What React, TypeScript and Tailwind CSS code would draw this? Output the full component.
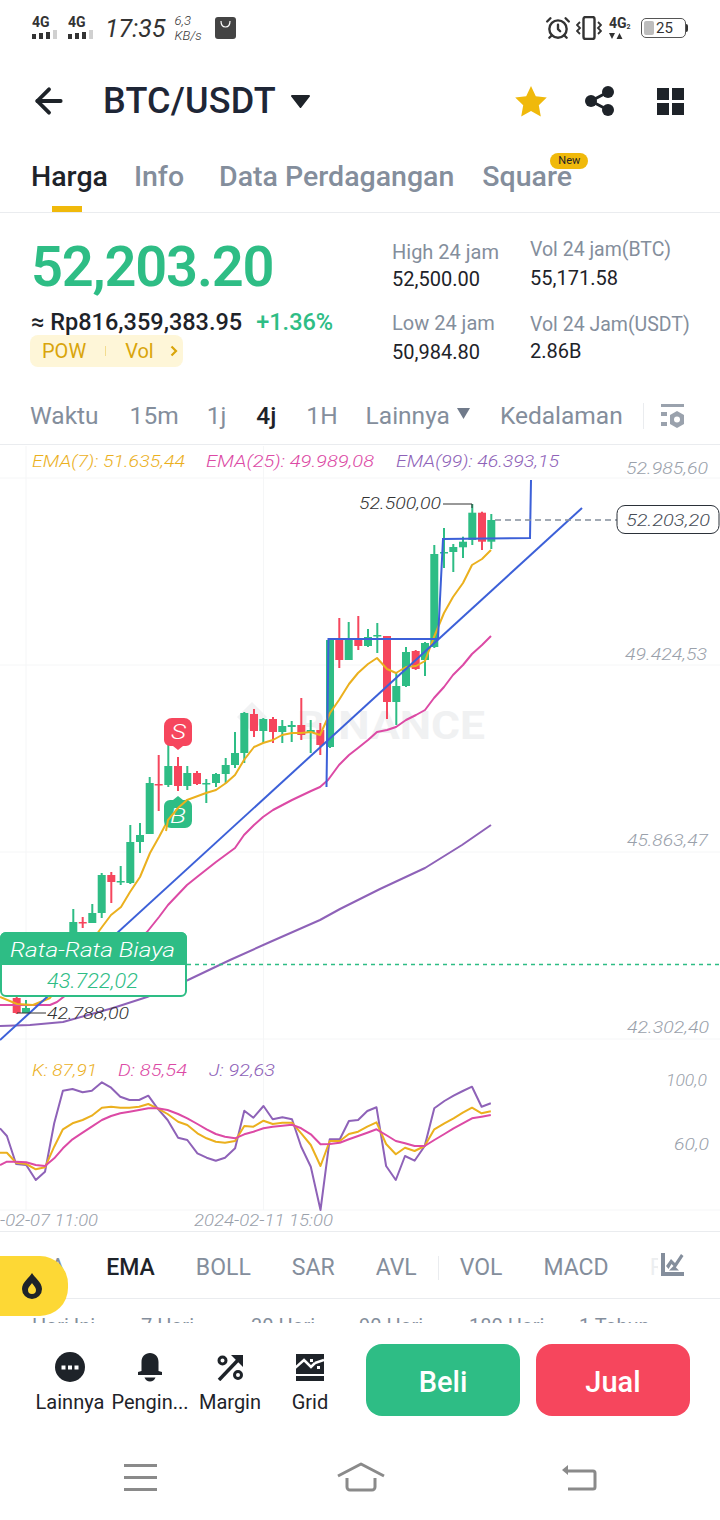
import { AlarmClock, ArrowLeft } from "lucide-react";

type Candle = [number, number, number, number, number, "g" | "r"];

// x, wick top, body top, body bottom, wick bottom
const candles: Candle[] = [
  [491.3, 514, 520, 541.7, 549, "g"], [482, 511.7, 512.7, 541.7, 550, "r"], [472.3, 504, 512.7, 540, 545, "g"],
  [463, 536.7, 541.7, 547.3, 558, "g"], [453.3, 544, 547, 552, 572, "g"], [444, 528, 552, 553.5, 568, "g"],
  [434.3, 545, 554, 647, 648, "g"], [425, 642, 643, 660, 676, "g"], [415.7, 650, 651, 669, 670, "r"],
  [406, 647, 652, 686, 687, "g"], [396.3, 673, 686, 702, 725, "g"], [387, 636, 636, 702, 719, "r"],
  [377.3, 623, 635, 636.5, 653, "g"], [368, 629, 637, 646, 647, "g"], [358.3, 616, 640, 646, 650, "r"],
  [348.7, 622, 640, 660, 660, "g"], [339.3, 618, 640, 660, 668, "r"], [330, 638, 640, 747, 748, "g"],
  [320.3, 723, 730, 745, 755, "r"], [310.7, 720, 730, 733, 753, "g"], [301.3, 698, 725, 735, 740, "r"],
  [291.7, 721, 725, 727, 742, "g"], [282.3, 720, 726, 732, 743, "g"], [273, 717, 719, 732, 743, "r"],
  [263.3, 718, 719, 731, 743, "g"], [254, 709, 714, 731, 737, "r"], [244.3, 712, 713, 753, 763, "g"],
  [235, 732, 753, 765, 768, "g"], [225.7, 758, 765, 774, 783, "g"], [216, 773, 774, 783, 787, "g"],
  [206.3, 779, 783, 784.5, 803, "g"], [197, 771, 773, 784, 785, "r"], [187.3, 766, 773, 786, 790, "g"],
  [178, 757, 766, 786, 791, "r"], [168.3, 743, 766, 785, 787, "g"], [158.7, 755, 784, 785.5, 811, "r"],
  [149.7, 777, 783, 834, 834, "g"], [140, 823, 835, 842, 853, "g"], [130.3, 825, 842, 883, 884, "g"],
  [120.7, 866, 881, 882.5, 885, "g"], [111.3, 872, 875, 882, 903, "r"], [101.7, 873, 875, 913, 918, "g"],
  [92.3, 904, 913, 923, 923, "g"], [82.7, 917, 922, 923.5, 928, "r"], [73.3, 909, 922, 932, 938, "g"],
  [26, 1000, 1008, 1013, 1013, "g"], [16.7, 995, 998, 1013, 1014, "r"],
];

const ema7 = "0,997 17,1004 33,1005 50,998 102,927 111,915 121,907 130,892 140,877 150,853 159,837 168,820 178,808 187,800 206,793 216,790 226,783 235,775 244,760 254,747 263,743 273,740 282,735 292,733 301,733 311,732 320,735 330,713 339,700 349,684 358,673 368,664 377,658 387,669 396,673 406,667 416,666 425,661 434,637 444,613 453,597 463,583 472,565 482,559 491,550";
const ema25 = "0,1005 33,1005 50,1005 57,1002 147,932 159,917 168,905 187,885 197,877 216,862 235,848 244,835 254,825 263,817 273,810 292,800 311,791 320,787 328,780 339,765 349,755 358,748 368,740 377,732 387,730 396,727 406,720 416,715 425,710 434,698 444,687 453,675 463,665 472,654 482,645 491,636";
const ema99 = "0,1026 30,1025 63,1022 113,1008 147,997 188,980 230,960 270,942 320,920 340,909 380,889 425,868 462,845 491,825";

// KDJ points read off the zoomed crop (x / 2.178, 1040 + y / 3)
const kdjXs = [0,15,35,57,78,98,118,137,158,180,200,222,242,262,282,303,323,343,365,388,408,430,450,470,490,512,532,552,574,594,615,636,656,677,698,718,740,760,780,800,820,841,862,882,903,925,946,968,988,1008,1028,1049,1069];
const kdjJ = [265,288,372,375,420,395,250,152,147,157,152,127,143,170,180,180,167,205,240,293,300,340,353,362,353,325,212,233,198,238,232,238,320,380,510,298,298,243,240,213,202,378,420,348,362,318,205,183,167,153,140,200,190];
const kdjK = [338,338,368,372,388,382,320,268,250,240,227,203,200,203,203,200,192,205,222,245,255,280,295,305,308,303,258,260,242,252,248,248,280,315,378,303,303,282,275,260,247,312,343,323,333,318,268,250,235,218,203,220,214];
const kdjD = [375,365,365,367,375,378,355,325,298,278,260,240,228,220,215,210,205,205,210,222,235,252,268,282,290,295,283,275,265,260,257,254,265,283,313,312,308,298,288,278,268,285,303,310,318,318,300,282,265,250,235,230,225];
const kdjLine = (ys: number[]) => ys.map((y, i) => `${(kdjXs[i] / 2.178).toFixed(1)},${(1040 + y / 3).toFixed(1)}`).join(" ");

const Label = ({ x, y, w, size = 16, fill = "#9aa1ab", children }: { x: number; y: number; w: number; size?: number; fill?: string; children: string }) => (
  <text x={x} y={y} fontSize={size} fill={fill} textLength={w} lengthAdjust="spacingAndGlyphs" dominantBaseline="central" className="italic font-light">
    {children}
  </text>
);

const Chart = () => (
  <svg width="720" height="786" viewBox="0 445 720 786" className="block">
    {/* grid */}
    <g stroke="#f5f6f7" strokeWidth="1">
      {[478, 665, 852, 1039, 1210].map((y) => <line key={y} x1="0" x2="720" y1={y} y2={y} />)}
      {[26, 263.5].map((x) => <line key={x} x1={x} x2={x} y1="446" y2="1210" />)}
    </g>

    {/* watermark */}
    <path d="M252 702l15 15-15 15-15-15z" fill="#f1f2f3" />
    <text x="297" y="726" fontSize="38" fontWeight="700" fill="#f0f1f2" textLength="188" lengthAdjust="spacingAndGlyphs" dominantBaseline="central">BINANCE</text>

    {/* candles */}
    {candles.map(([x, wt, bt, bb, wb, c]) => (
      <g key={x} fill={c === "g" ? "#2ebd85" : "#f6465d"}>
        <rect x={x - 1} y={wt} width="2" height={wb - wt} />
        <rect x={x - 4} y={bt} width="8" height={Math.max(bb - bt, 1.5)} />
      </g>
    ))}

    {/* ema */}
    <g fill="none" strokeWidth="2" strokeLinejoin="round">
      <polyline points={ema99} stroke="#8e62b8" />
      <polyline points={ema25} stroke="#dc4aa5" />
      <polyline points={ema7} stroke="#ebb01e" />
    </g>

    {/* drawn trend lines */}
    <g fill="none" stroke="#3c60d8" strokeWidth="2">
      <line x1="0" y1="1040" x2="582" y2="508" />
      <polyline points="326.5,787 328.5,639 438,639 443,539 530,538 531,480" />
    </g>

    {/* high / low / last */}
    <polyline points="443,504 472,504 472,508" fill="none" stroke="#333" strokeWidth="1" />
    <Label x={359} y={503} w={82} fill="#333">52.500,00</Label>
    <line x1="495" x2="617" y1="520" y2="520" stroke="#848e9c" strokeWidth="1.5" strokeDasharray="6 4" />
    <rect x="617" y="505.5" width="102" height="28" rx="8" fill="#fff" stroke="#2b3139" strokeWidth="1" />
    <Label x={626} y={520} w={84} fill="#474d57">52.203,20</Label>
    <line x1="17" x2="46" y1="1013" y2="1013" stroke="#333" strokeWidth="1" />
    <Label x={47} y={1013} w={82} fill="#333">42.788,00</Label>

    {/* price axis */}
    <Label x={626} y={468} w={82}>52.985,60</Label>
    <Label x={625} y={654} w={82}>49.424,53</Label>
    <Label x={627} y={840} w={81}>45.863,47</Label>
    <Label x={627} y={1027} w={82}>42.302,40</Label>

    {/* legend */}
    <Label x={32} y={461} w={153} fill="#ebb01e">EMA(7): 51.635,44</Label>
    <Label x={206} y={461} w={168} fill="#dc4aa5">EMA(25): 49.989,08</Label>
    <Label x={396} y={461} w={163} fill="#8e62b8">EMA(99): 46.393,15</Label>

    {/* buy / sell markers */}
    <path d="M172 718h12a8 8 0 0 1 8 8v14a6 6 0 0 1-6 6h-3l-5 4-5-4h-3a6 6 0 0 1-6-6v-14a8 8 0 0 1 8-8z" fill="#f6465d" />
    <Label x={171} y={732} w={15} size={20} fill="#fff">S</Label>
    <path d="M178 796l5 4h3a6 6 0 0 1 6 6v15a7 7 0 0 1-7 7h-14a7 7 0 0 1-7-7v-15a6 6 0 0 1 6-6h3z" fill="#2ebd85" />
    <Label x={170} y={816} w={16} size={20} fill="#fff">B</Label>
    <polyline points="166,831 168,820 178,808 187,800" fill="none" stroke="#ebb01e" strokeWidth="2" />

    {/* average cost box */}
    <line x1="187" x2="720" y1="964.5" y2="964.5" stroke="#2ebd85" strokeWidth="1.5" strokeDasharray="4 4" />
    <rect x="1" y="933" width="185" height="63" rx="5" fill="#fff" stroke="#2ebd85" strokeWidth="2" />
    <path d="M0 965v-27a6 6 0 0 1 6-6h175a6 6 0 0 1 6 6v27z" fill="#2ebd85" />
    <Label x={10} y={950} w={165} size={20} fill="#fff">Rata-Rata Biaya</Label>
    <Label x={47} y={981} w={91} size={20} fill="#2ebd85">43.722,02</Label>

    {/* kdj */}
    <Label x={32} y={1070} w={65} fill="#ebb01e">K: 87,91</Label>
    <Label x={118} y={1070} w={69} fill="#dc4aa5">D: 85,54</Label>
    <Label x={209} y={1070} w={66} fill="#8e62b8">J: 92,63</Label>
    <Label x={666} y={1080} w={41}>100,0</Label>
    <Label x={674} y={1144} w={35}>60,0</Label>
    <g fill="none" strokeWidth="2" strokeLinejoin="round">
      <polyline points={kdjLine(kdjJ)} stroke="#8e62b8" />
      <polyline points={kdjLine(kdjK)} stroke="#ebb01e" />
      <polyline points={kdjLine(kdjD)} stroke="#dc4aa5" />
    </g>
    <Label x={0} y={1220} w={98}>-02-07 11:00</Label>
    <Label x={194} y={1220} w={139}>2024-02-11 15:00</Label>
  </svg>
);

const Signal = () => (
  <div className="flex flex-col items-start w-[28px] h-[24px]">
    <span className="text-[14px] leading-[12px] font-bold text-[#333]">4G</span>
    <div className="flex items-end gap-[3px] mt-[2px] h-[9px]">
      <span className="w-[4px] h-[5px] bg-[#333]" />
      <span className="w-[4px] h-[6px] bg-[#333]" />
      <span className="w-[4px] h-[7px] bg-[#333]" />
      <span className="w-[4px] h-[9px] bg-[#d0d0d0]" />
    </div>
  </div>
);

const StatusBar = () => (
  <div className="h-[56px] flex items-center pl-[32px] pr-[34px] text-[#333]">
    <div className="flex gap-2"><Signal /><Signal /></div>
    <span className="ml-[9px] text-[25px] italic leading-none">17:35</span>
    <div className="ml-[9px] flex flex-col w-[32px] text-[13px] leading-[15px] italic font-light">
      <span>6,3</span>
      <span>KB/s</span>
    </div>
    <svg width="21" height="22" viewBox="0 0 21 22" className="ml-[8px]">
      <rect width="21" height="22" rx="3" fill="#444" />
      <path d="M6 4c0 4 2 6 4.500 6S15 8 15 4" fill="none" stroke="#fff" strokeWidth="1.200" />
    </svg>
    <AlarmClock size={26} strokeWidth={2.2} className="ml-auto text-[#333]" />
    <svg width="26" height="24" viewBox="0 0 26 24" className="ml-[5px]" fill="none" stroke="#333">
      <rect x="7.500" y="1" width="11" height="22" rx="2" strokeWidth="2.400" />
      <path d="M4 6L1 9l3 3-3 3 3 3M22 6l3 3-3 3 3 3-3 3" strokeWidth="1.800" />
    </svg>
    <div className="ml-[7px] w-[24px] flex flex-col">
      <span className="text-[14px] leading-[12px] font-bold whitespace-nowrap">4G<sub className="text-[7px]">2</sub></span>
      <svg width="14" height="8" viewBox="0 0 14 8" className="mt-[3px]">
        <path d="M0 1h6L3 7zM7.500 7h6l-3-6z" fill="#333" />
      </svg>
    </div>
    <div className="ml-[8px] w-[45px] h-[20px] border border-[#555] rounded-[5px] flex items-center relative">
      <span className="ml-[2px] w-[10px] h-[14px] rounded-[2px] bg-[#bdbdbd]" />
      <span className="ml-[2px] text-[15px] leading-none">25</span>
      <span className="absolute right-[-3px] w-[2px] h-[8px] bg-[#333] rounded-r" />
    </div>
  </div>
);

const Header = () => (
  <div className="h-[90px] flex items-center pl-[29px] pr-[36px]">
    <ArrowLeft size={40} strokeWidth={2.3} className="text-[#1e2329]" />
    <span className="ml-[34px] text-[36px] font-medium text-[#1e2636] leading-none tracking-[0.2px]">BTC/USDT</span>
    <svg width="19" height="13" viewBox="0 0 19 13" className="ml-[15px]"><path d="M1 0h17a1 1 0 0 1 .8 1.600l-8.500 11a1 1 0 0 1-1.600 0L.2 1.600A1 1 0 0 1 1 0z" fill="#1e2329" /></svg>
    <svg width="32" height="31" viewBox="0 0 32 31" className="ml-auto">
      <path d="M16 0l4.800 10.200 11 1.400-8 7.700 2 11.200L16 25l-9.800 5.500 2-11.200-8-7.700 11-1.400z" fill="#f0b90b" strokeLinejoin="round" />
    </svg>
    <svg width="29" height="30" viewBox="0 0 29 30" className="ml-[38px]">
      <g fill="#1e2329"><circle cx="6" cy="15" r="6" /><circle cx="23" cy="6" r="6" /><circle cx="23" cy="24" r="6" /></g>
      <path d="M6 15L23 6M6 15l17 9" stroke="#1e2329" strokeWidth="3" />
    </svg>
    <div className="ml-[43px] grid grid-cols-2 gap-[3px] w-[27px]">
      <span className="h-[12px] bg-[#1e2329]" /><span className="h-[12px] bg-[#1e2329]" />
      <span className="h-[12px] bg-[#1e2329]" /><span className="h-[12px] bg-[#1e2329]" />
    </div>
  </div>
);

const Tabs = () => (
  <div className="h-[67px] border-b border-[#eaecef] relative">
    <div className="flex pl-[31px] pt-[13px] text-[28.5px] leading-[36px] font-medium text-[#848e9c]">
      <span className="text-[#1e2329]">Harga</span>
      <span className="ml-[26px]">Info</span>
      <span className="ml-[35px]">Data Perdagangan</span>
      <span className="ml-[28px] relative">
        Square
        <span className="absolute left-[68px] top-[-6px] w-[38px] h-[16px] rounded-full bg-[#f0b90b] text-[#1e2329] text-[11px] leading-[16px] text-center font-normal">New</span>
      </span>
    </div>
    <span className="absolute left-[52px] bottom-0 w-[30px] h-[6px] bg-[#f0b90b]" />
  </div>
);

const Stat = ({ label, value, gap, labelClass }: { label: string; value: string; gap: string; labelClass: string }) => (
  <div className="h-[71px]">
    <div className={`leading-[26px] text-[#848e9c] ${labelClass}`}>{label}</div>
    <div className={`text-[20px] leading-[26px] text-[#1e2329] ${gap}`}>{value}</div>
  </div>
);

const PriceInfo = () => (
  <div className="h-[169px] flex pl-[31px] pt-[22px]">
    <div className="w-[361px]">
      <div className="text-[56px] leading-[64px] font-semibold text-[#2ebd85] tracking-[-1.2px]">52,203.20</div>
      <div className="mt-[8px] flex text-[23.5px] leading-[30px] font-medium text-[#1e2329]">
        <span>≈ Rp816,359,383.95</span>
        <span className="ml-[14px] text-[#2ebd85]">+1.36%</span>
      </div>
      <div className="mt-[-2px] w-[153px] h-[32px] ml-[-1px] rounded-[8px] bg-[#fef6d8] flex items-center pl-[12px] text-[20px] text-[#d9a50b]">
        <span>POW</span>
        <span className="ml-[19px] w-px h-[10px] bg-[#f3dc8e]" />
        <span className="ml-[19px]">Vol</span>
        <svg width="8" height="12" viewBox="0 0 8 12" className="ml-[16px]"><path d="M1.500 1.500L6 6l-4.500 4.500" fill="none" stroke="#d9a50b" strokeWidth="2.200" /></svg>
      </div>
    </div>
    <div className="w-[138px] pt-[4px]">
      <Stat label="High 24 jam" value="52,500.00" gap="mt-[1px]" labelClass="text-[20px]" />
      <Stat label="Low 24 jam" value="50,984.80" gap="mt-[3px]" labelClass="text-[20px]" />
    </div>
    <div className="mt-[2px]">
      <Stat label="Vol 24 jam(BTC)" value="55,171.58" gap="mt-[2px]" labelClass="text-[19.5px]" />
      <Stat label="Vol 24 Jam(USDT)" value="2.86B" gap="mt-[0px]" labelClass="text-[19.5px] mt-[4px]" />
    </div>
  </div>
);

const TimeRow = () => (
  <div className="h-[63px] flex items-center pl-[30px] pt-[6px] border-b border-[#eaecef] text-[24.5px] text-[#848e9c]">
    <span>Waktu</span>
    <span className="ml-[31px]">15m</span>
    <span className="ml-[28px]">1j</span>
    <span className="ml-[30px] font-medium text-[#1e2329]">4j</span>
    <span className="ml-[30px]">1H</span>
    <span className="ml-[28px]">Lainnya</span>
    <svg width="13" height="11" viewBox="0 0 13 11" className="ml-[7px] mb-[5px]"><path d="M0 0h13L6.500 11z" fill="#707a8a" /></svg>
    <span className="ml-[30px]">Kedalaman</span>
    <span className="ml-[20px] w-px h-[26px] bg-[#eaecef]" />
    <svg width="25" height="25" viewBox="0 0 25 25" className="ml-[17px]">
      <g fill="#9aa2ad">
        <rect x="0" y="0" width="23" height="3" />
        <rect x="0" y="8" width="6" height="4" />
        <rect x="0" y="18" width="6" height="4" />
        <path d="M16 7l7 4v9l-7 4-7-4v-9z" />
      </g>
      <circle cx="16" cy="15.500" r="3" fill="#fff" />
    </svg>
  </div>
);

const IndicatorRow = () => (
  <div className="relative h-[68px] border-t border-b border-[#eaecef] overflow-hidden">
    <div className="flex items-center h-full gap-[41px] pl-[30px] pt-[6px] text-[23px] text-[#848e9c]">
      <span>MA</span>
      <span className="font-medium text-[#1e2329]">EMA</span>
      <span>BOLL</span>
      <span>SAR</span>
      <span>AVL</span>
      <span className="mx-[-20px] w-px h-[24px] bg-[#eaecef]" />
      <span>VOL</span>
      <span>MACD</span>
      <span className="text-[#eceef0]">RSI</span>
    </div>
    <div className="absolute right-0 top-0 bottom-0 w-[62px] bg-white" />
    <svg width="23" height="23" viewBox="0 0 23 23" className="absolute left-[661px] top-[21px]">
      <g fill="#848e9c">
        <path d="M0 0h4v19h19v4H0z" />
        <path d="M5 13l5-7 4 4 6-9 2.500 2-8 12-4-4-3 5z" />
        <path d="M8 17.500l5-5 5 5z" />
      </g>
    </svg>
  </div>
);

const PeriodRow = () => (
  <div className="h-[24px] overflow-hidden relative">
    <div className="absolute top-[15px] left-0 w-full text-[20px] leading-[24px] text-[#848e9c]">
      <div className="flex pl-[32px]">
        <span className="w-[109px]">Hari Ini</span>
        <span className="w-[110px]">7 Hari</span>
        <span className="w-[108px]">30 Hari</span>
        <span className="w-[110px]">90 Hari</span>
        <span className="w-[110px]">180 Hari</span>
        <span>1 Tahun</span>
      </div>
    </div>
  </div>
);

const ActionIcon = ({ label, children }: { label: string; children: React.ReactNode }) => (
  <div className="w-[80px] flex flex-col items-center">
    <div className="h-[30px] flex items-center justify-center">{children}</div>
    <span className="mt-[6px] text-[20px] leading-[28px] text-[#1e2329] whitespace-nowrap">{label}</span>
  </div>
);

const BottomBar = () => (
  <div className="flex pl-[30px] pt-[21px]">
    <div className="flex w-[320px] pt-[8px] items-start">
      <ActionIcon label="Lainnya">
        <svg width="30" height="30" viewBox="0 0 30 30">
          <circle cx="15" cy="15" r="15" fill="#1e2329" />
          <g fill="#fff"><rect x="6.500" y="13.500" width="4" height="4" /><rect x="13" y="13.500" width="4" height="4" /><rect x="19.500" y="13.500" width="4" height="4" /></g>
        </svg>
      </ActionIcon>
      <ActionIcon label="Pengin...">
        <svg width="24" height="29" viewBox="0 0 24 29">
          <path d="M12 0c5 0 8.500 3.500 8.500 9v9l3.500 1v3H0v-3l3.500-1V9C3.500 3.500 7 0 12 0z" fill="#1e2329" />
          <path d="M6.500 24.500h11c-1 2.500-3 4-5.500 4s-4.500-1.500-5.500-4z" fill="#1e2329" />
        </svg>
      </ActionIcon>
      <ActionIcon label="Margin">
        <svg width="27" height="27" viewBox="0 0 27 27">
          <path d="M2 26L22 5" stroke="#1e2329" strokeWidth="3.500" fill="none" />
          <path d="M14 1h12v12l-4.500-4.500-3.500-3.500z" fill="#1e2329" />
          <circle cx="5.500" cy="6.500" r="3.500" fill="none" stroke="#1e2329" strokeWidth="3" />
          <circle cx="21" cy="21" r="3.500" fill="none" stroke="#1e2329" strokeWidth="3" />
        </svg>
      </ActionIcon>
      <ActionIcon label="Grid">
        <svg width="28" height="27" viewBox="0 0 28 27">
          <path d="M0 0h28v20H0z" fill="#1e2329" />
          <path d="M-1 14L8 6l7 7 4-4M19 9l9-3" fill="none" stroke="#fff" strokeWidth="2.500" />
          <path d="M14 5h3v3h-3zM21 12h3v3h-3z" fill="#fff" />
          <rect y="22" width="28" height="5" fill="#1e2329" />
        </svg>
      </ActionIcon>
    </div>
    <button className="ml-[16px] w-[154px] h-[72px] pt-[6px] rounded-[16px] bg-[#2ebd85] text-white text-[29px] font-medium">Beli</button>
    <button className="ml-[16px] w-[154px] h-[72px] pt-[6px] rounded-[16px] bg-[#f6465d] text-white text-[29px] font-medium">Jual</button>
  </div>
);

const NavBar = () => (
  <div className="mt-[45px] flex items-center h-[32px] relative">
    <div className="ml-[124px] flex flex-col gap-[9px] w-[33px]">
      <span className="h-[3px] bg-[#8a8a8a]" /><span className="h-[3px] bg-[#8a8a8a]" /><span className="h-[3px] bg-[#8a8a8a]" />
    </div>
    <svg width="48" height="30" viewBox="0 0 48 30" className="ml-[180px]" fill="none" stroke="#8a8a8a" strokeWidth="3">
      <path d="M1 14L24 2l23 12" strokeLinejoin="round" />
      <path d="M10 16v9a3 3 0 0 0 3 3h22a3 3 0 0 0 3-3v-9" />
    </svg>
    <svg width="35" height="27" viewBox="0 0 35 27" className="ml-[177px]" fill="none" stroke="#8a8a8a" strokeWidth="3">
      <path d="M5 7h26a2 2 0 0 1 2 2v14a2 2 0 0 1-2 2H6" />
      <path d="M0 6l6-5v10z" fill="#8a8a8a" stroke="none" />
    </svg>
  </div>
);

export default function App() {
  return (
    <div className="relative w-[720px] h-[1520px] overflow-hidden bg-white font-['Roboto',sans-serif]">
      <StatusBar />
      <Header />
      <Tabs />
      <PriceInfo />
      <TimeRow />
      <Chart />
      <IndicatorRow />
      <PeriodRow />
      <BottomBar />
      <NavBar />
      {/* floating promo button */}
      <div className="absolute left-0 top-[1256px] w-[68px] h-[60px] rounded-r-[28px] bg-[#fdd835] flex items-center justify-center pr-[4px]">
        <svg width="22" height="26" viewBox="0 0 22 26">
          <path fillRule="evenodd" d="M11 0c2 4 10 9 10 16a10 10 0 0 1-20 0C1 9 9 4 11 0zm0 10c-1 2-4 4-4 7a4 4 0 0 0 8 0c0-3-3-5-4-7z" fill="#1e2329" />
        </svg>
      </div>
    </div>
  );
}
